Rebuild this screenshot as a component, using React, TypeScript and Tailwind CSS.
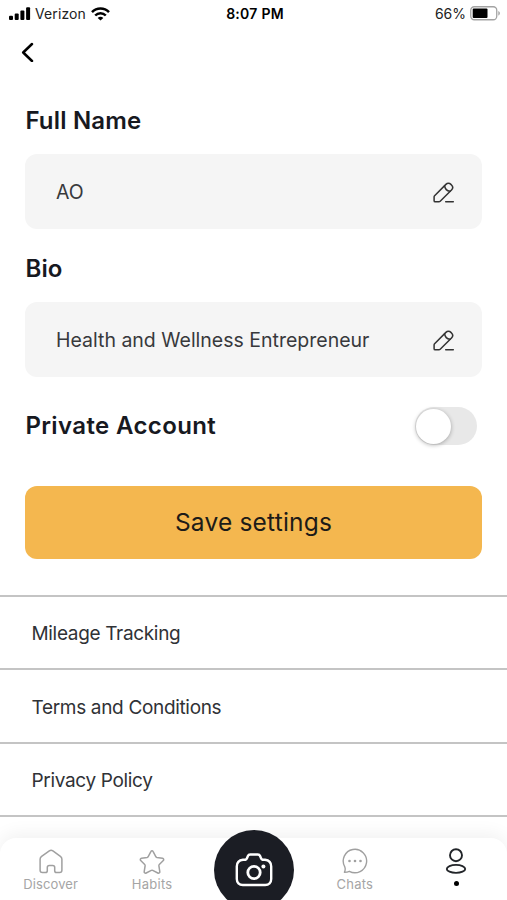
import { useState } from "react";

function SignalIcon() {
  return (
    <svg width="22" height="14" viewBox="0 0 22 14" fill="#000">
      <rect x="0" y="8.7" width="4" height="4.3" rx="1" />
      <rect x="5.7" y="6.4" width="4" height="6.6" rx="1" />
      <rect x="11.4" y="3.6" width="4" height="9.4" rx="1" />
      <rect x="17.1" y="0.2" width="4" height="12.8" rx="1" />
    </svg>
  );
}

function WifiIcon() {
  return (
    <svg width="19" height="14" viewBox="0 0 19 14" fill="none" stroke="#000" strokeWidth="2.5">
      <path d="M1 5.1C5.7.2 13.3.2 18 5.1" />
      <path d="M4.2 8.5c3-3.1 7.6-3.1 10.6 0" />
      <path d="M6.7 10.9c1.6-1.6 4-1.6 5.6 0L9.5 13.6z" fill="#000" stroke="none" />
    </svg>
  );
}

function BatteryIcon() {
  return (
    <svg width="31" height="15" viewBox="0 0 31 15" fill="none">
      <rect x=".75" y=".75" width="26" height="13" rx="3.5" stroke="#a3a3a3" strokeWidth="1.3" />
      <rect x="2.7" y="2.6" width="14.8" height="9.3" rx="1" fill="#000" />
      <path d="M28.3 5c2.1.8 2.1 3.7 0 4.6z" fill="#a3a3a3" />
    </svg>
  );
}

function PencilIcon() {
  return (
    <svg width="22" height="22" viewBox="0 0 22 22" fill="none" stroke="#333" strokeWidth="1.5" strokeLinecap="round" strokeLinejoin="round">
      <path d="M1.6 13.7 12.9 2.4c1.4-1.4 3.6-1.4 5 0l.6.6c1.400 1.400 1.400 3.600 0 5L7.200 19.300c-.4.400-.8.500-1.300.500H2.200c-.7 0-1.100-.4-1.100-1.100v-3.700c0-.5.1-.9.5-1.300Z" />
      <path d="M11.600 3.800c.4 3 2.400 5 5.400 5.500M12.700 19.800h7.600" />
    </svg>
  );
}

function HomeIcon() {
  return (
    <svg width="26" height="26" viewBox="0 0 26 26" fill="none" stroke="#a0a0a0" strokeWidth="1.5" strokeLinejoin="round">
      <path d="M2.1 11.3c0-1.3.5-2.2 1.5-3l7.7-5.500c1.200-.8 2.400-.8 3.600 0l7.500 5.500c1 .8 1.500 1.700 1.500 3v10.900c0 1.400-.9 2.300-2.300 2.300h-3.100c-1.100 0-1.800-.7-1.800-1.800v-3.100c0-1.300-.8-2-2-2h-3.400c-1.200 0-2 .7-2 2v3.100c0 1.100-.7 1.800-1.800 1.800H4.400c-1.400 0-2.300-.9-2.300-2.300z" />
    </svg>
  );
}

function StarIcon() {
  return (
    <svg width="26" height="26" viewBox="0 0 26 26" fill="none" stroke="#a0a0a0" strokeWidth="1.5" strokeLinejoin="round">
      <path d="M12 2.4c.5-1 1.5-1 2 0l2.8 5.2c.2.4.6.7 1.100.8l5.600.8c1.200.2 1.600 1.500.8 2.300l-4 4c-.4.300-.5.800-.4 1.300l.9 5.800c.2 1.100-1 2-2 1.400l-5.100-2.600c-.4-.2-.9-.2-1.400 0L7.200 24c-1 .6-2.200-.3-2-1.400l.9-5.800c.1-.5 0-1-.4-1.300l-4-4c-.8-.8-.4-2.100.8-2.300l5.600-.8c.5-.1.9-.4 1.100-.8z" />
    </svg>
  );
}

function CameraIcon() {
  return (
    <svg width="38" height="34" viewBox="0 0 38 34" fill="none" stroke="#fff" strokeWidth="2.4" strokeLinejoin="round">
      <path d="M10.3 6.8c.9-.4 1.5-1.1 1.9-2.1l.7-1.700c.4-1 1.200-1.500 2.300-1.500h7.600c1.100 0 1.900.5 2.300 1.500l.7 1.700c.4 1 1 1.700 1.900 2.100h2.300c3.800.5 6.200 3 6.200 6.700v12.500c0 3.600-2.300 6-6 6H7.800c-3.700 0-6-2.400-6-6v-12.500c0-3.700 2.400-6.200 6.200-6.700z" />
      <circle cx="19" cy="19.5" r="6.2" strokeWidth="2.8" />
      <circle cx="28.4" cy="13.6" r="2" fill="#fff" stroke="none" />
    </svg>
  );
}

function ChatIcon() {
  return (
    <svg width="26" height="26" viewBox="0 0 26 26" fill="none" stroke="#a0a0a0" strokeWidth="1.4" strokeLinejoin="round">
      <path d="M2.8 18.9A11.7 11.7 0 1 1 7.3 23.3C5.8 24 4.2 24.2 2.4 24.2c.8-1.6 1.2-3.3.4-5.3Z" />
      <g fill="#a0a0a0" stroke="none">
        <circle cx="7.5" cy="13" r="1.3" />
        <circle cx="13" cy="13" r="1.3" />
        <circle cx="18.5" cy="13" r="1.3" />
      </g>
    </svg>
  );
}

function ProfileIcon() {
  return (
    <svg width="22" height="26" viewBox="0 0 22 26" fill="none" stroke="#222529" strokeWidth="1.9">
      <circle cx="11" cy="7.2" r="6" />
      <ellipse cx="11" cy="20.9" rx="9.2" ry="4" />
    </svg>
  );
}

function Field({ label, value }: { label: string; value: string }) {
  return (
    <div className="h-[148px]">
      <h2 className="pl-[0.4px] text-[24px] leading-[30px] font-semibold tracking-[0.18px]">{label}</h2>
      <div className="mt-[18px] flex h-[75px] items-center justify-between rounded-xl bg-[#f5f5f5] pt-[2px] pr-[27px] pl-[31px]">
        <span className="pt-px text-[19.5px] text-[#38393c]">{value}</span>
        <button aria-label={`Edit ${label}`}>
          <PencilIcon />
        </button>
      </div>
    </div>
  );
}

const links = ["Mileage Tracking", "Terms and Conditions", "Privacy Policy"];

export default function App() {
  const [isPrivate, setIsPrivate] = useState(false);

  return (
    <main className="flex h-[900px] w-[507px] flex-col overflow-hidden bg-white font-['Inter',sans-serif] text-[#17191f]">
      <header className="grid h-7 grid-cols-3 items-center pr-[6px] pb-px pl-[9px] text-[14px] text-[#222]">
        <div className="flex items-center gap-[5px]">
          <SignalIcon />
          <span className="-ml-px tracking-[0.1px]">Verizon</span>
          <WifiIcon />
        </div>
        <span className="text-center font-semibold tracking-[0.25px] text-black">8:07 PM</span>
        <div className="flex items-center justify-end gap-[4px]">
          <span>66%</span>
          <BatteryIcon />
        </div>
      </header>

      <button className="mt-[14px] ml-[21px] h-5 w-4" aria-label="Back">
        <svg width="14" height="20" viewBox="0 0 14 20" fill="none" stroke="#000" strokeWidth="2.5" strokeLinecap="round" strokeLinejoin="round">
          <path d="M11 2 2.2 10.5 11 19" />
        </svg>
      </button>

      <section className="mt-[44px] px-[25px]">
        <Field label="Full Name" value="AO" />
        <Field label="Bio" value="Health and Wellness Entrepreneur" />
        <div className="mt-[4px] flex h-[40px] items-center justify-between pr-[5px]">
          <h2 className="pl-[0.4px] text-[24px] font-semibold tracking-[0.37px]">Private Account</h2>
          <button
            role="switch"
            aria-checked={isPrivate}
            aria-label="Private Account"
            onClick={() => setIsPrivate(!isPrivate)}
            className={`flex h-[38px] w-[62px] items-center rounded-full bg-[#e8e8e8] px-px ${isPrivate ? "justify-end" : "justify-start"}`}
          >
            <span className="size-[35px] rounded-full bg-white shadow-[0_1px_4px_rgba(0,0,0,0.3)]" />
          </button>
        </div>
        <button className="mt-[40px] h-[73px] w-full rounded-xl bg-[#f4b74f] text-[24.5px] tracking-[0.2px] text-[#1c1b18]">Save settings</button>
      </section>

      <ul className="mt-[36px] border-t-2 border-[#c4c4c4]">
        {links.map((link) => (
          <li key={link} className="flex h-[73.4px] items-center border-b-2 border-[#c4c4c4] pt-[4px] pl-[31.5px] text-[19px] tracking-[-0.33px] text-[#303236]">
            {link}
          </li>
        ))}
      </ul>

      <nav className="mt-auto grid h-[62px] shrink-0 grid-cols-5 rounded-t-2xl bg-white text-[13px] text-[#a5a5a5] shadow-[0_-4px_18px_rgba(0,0,0,0.06)]">
        <a className="flex flex-col items-center pt-[10px]">
          <HomeIcon />
          <span className="leading-5 tracking-[0.1px]">Discover</span>
        </a>
        <a className="flex flex-col items-center pt-[11px]">
          <StarIcon />
          <span className="-mt-px leading-5 tracking-[0.25px]">Habits</span>
        </a>
        <a className="-mt-2 ml-px flex size-20 items-center justify-center justify-self-center rounded-full bg-[#1b1d24]">
          <CameraIcon />
        </a>
        <a className="flex flex-col items-center pt-[10px]">
          <ChatIcon />
          <span className="leading-5 tracking-[0.25px]">Chats</span>
        </a>
        <a className="flex flex-col items-center pt-[10px]">
          <ProfileIcon />
          <span className="mt-[7px] size-[5px] rounded-full bg-black" />
        </a>
      </nav>
    </main>
  );
}
